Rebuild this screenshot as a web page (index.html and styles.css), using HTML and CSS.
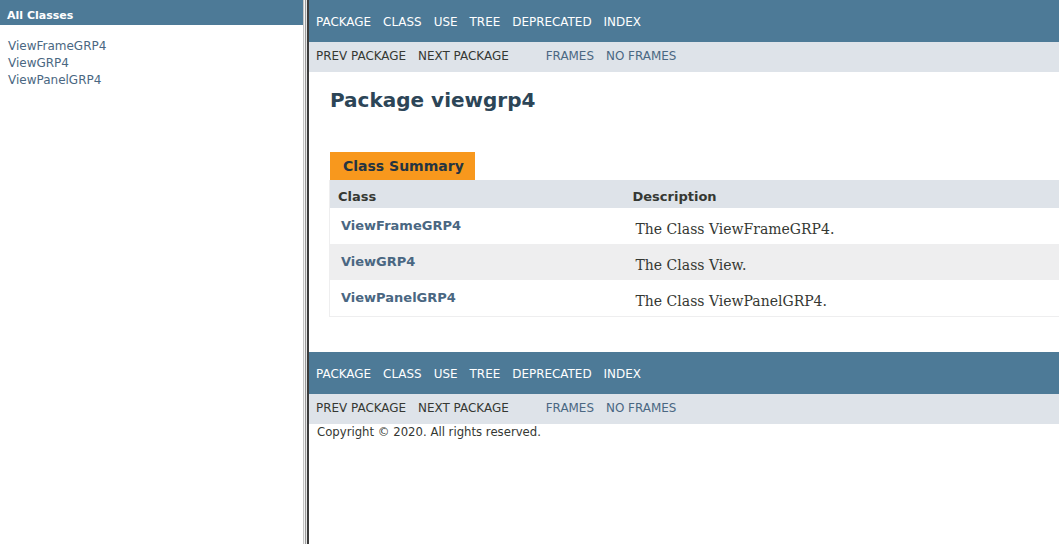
FILE: index.html
```html
<!DOCTYPE html>
<html>
<head>
<meta charset="utf-8">
<title>viewgrp4</title>
<link rel="stylesheet" href="styles.css">
</head>
<body>
<div class="frames">
  <aside class="left-frame">
    <h1 class="bar">All Classes</h1>
    <ul class="class-list">
      <li><a href="#">ViewFrameGRP4</a></li>
      <li><a href="#">ViewGRP4</a></li>
      <li><a href="#">ViewPanelGRP4</a></li>
    </ul>
  </aside>
  <div class="frame-border"><span class="b1"></span><span class="b2"></span><span class="b3"></span><span class="b4"></span><span class="b5"></span></div>
  <main class="right-frame">
    <nav class="top-nav">
      <ul class="nav-list">
        <li>Package</li>
        <li>Class</li>
        <li>Use</li>
        <li>Tree</li>
        <li>Deprecated</li>
        <li>Index</li>
      </ul>
    </nav>
    <div class="sub-nav">
      <ul class="nav-list">
        <li>Prev Package</li>
        <li>Next Package</li>
      </ul>
      <ul class="nav-list">
        <li><a href="#">Frames</a></li>
        <li><a href="#">No Frames</a></li>
      </ul>
    </div>
    <div class="header">
      <h1 class="title">Package viewgrp4</h1>
    </div>
    <div class="content">
      <div class="caption"><span>Class Summary</span></div>
      <table class="summary">
        <thead>
          <tr><th class="col-first">Class</th><th class="col-last">Description</th></tr>
        </thead>
        <tbody>
          <tr class="alt-a"><td class="col-first"><a href="#">ViewFrameGRP4</a></td><td class="col-last"><div class="block">The Class ViewFrameGRP4.</div></td></tr>
          <tr class="alt-b"><td class="col-first"><a href="#">ViewGRP4</a></td><td class="col-last"><div class="block">The Class View.</div></td></tr>
          <tr class="alt-a"><td class="col-first"><a href="#">ViewPanelGRP4</a></td><td class="col-last"><div class="block">The Class ViewPanelGRP4.</div></td></tr>
        </tbody>
      </table>
    </div>
    <nav class="top-nav bottom">
      <ul class="nav-list">
        <li>Package</li>
        <li>Class</li>
        <li>Use</li>
        <li>Tree</li>
        <li>Deprecated</li>
        <li>Index</li>
      </ul>
    </nav>
    <div class="sub-nav">
      <ul class="nav-list">
        <li>Prev Package</li>
        <li>Next Package</li>
      </ul>
      <ul class="nav-list">
        <li><a href="#">Frames</a></li>
        <li><a href="#">No Frames</a></li>
      </ul>
    </div>
    <p class="legal">Copyright © 2020. All rights reserved.</p>
  </main>
</div>
</body>
</html>
```
FILE: styles.css
```css
html, body {
  margin: 0;
  padding: 0;
  height: 100%;
  background: #ffffff;
  font-family: "DejaVu Sans", Arial, sans-serif;
  color: #353833;
  overflow: hidden;
}

a {
  color: #4A6782;
  text-decoration: none;
}

.frames {
  display: flex;
  height: 544px;
}

.left-frame {
  width: 303px;
  flex: 0 0 303px;
  background: #ffffff;
}

.bar {
  margin: 0;
  height: 25px;
  box-sizing: border-box;
  padding: 9px 6px 0 7px;
  background: #4D7A97;
  color: #ffffff;
  font-size: 11px;
  font-weight: bold;
  line-height: 13px;
}

.class-list {
  list-style: none;
  margin: 0;
  padding: 13px 0 0 8px;
  font-size: 12px;
  line-height: 17px;
}

.frame-border {
  flex: 0 0 6px;
  display: flex;
}
.frame-border span { display: block; }
.frame-border .b1 { width: 1px; background: #c4c4c4; }
.frame-border .b2 { width: 1px; background: #f4f4f4; }
.frame-border .b3 { width: 1px; background: #9a9a9a; }
.frame-border .b4 { width: 1px; background: #e6e6e6; }
.frame-border .b5 { width: 2px; background: #3c3c3c; }

.right-frame {
  flex: 1;
  min-width: 0;
}

.nav-list {
  list-style: none;
  margin: 0 25px 0 0;
  padding: 0;
  display: flex;
}
.nav-list li {
  padding: 0 6px;
  text-transform: uppercase;
  font-size: 11.95px;
  line-height: 14px;
  white-space: nowrap;
}
.nav-list li:first-child { padding-left: 7px; }

.top-nav {
  height: 42px;
  box-sizing: border-box;
  padding-top: 15px;
  background: #4D7A97;
  color: #ffffff;
}

.top-nav.bottom {
  margin-top: 35px;
}

.sub-nav {
  height: 30px;
  box-sizing: border-box;
  padding-top: 7px;
  background: #dee3e9;
  display: flex;
}
.sub-nav .nav-list + .nav-list li:first-child { padding-left: 6px; }

.header {
  padding: 16px 0 0 21px;
}
.title {
  margin: 0;
  font-size: 20px;
  line-height: 24px;
  font-weight: bold;
  color: #2c4557;
}

.content {
  padding: 40px 0 0 20px;
}

.caption {
  display: flex;
}
.caption span {
  margin-left: 1px;
  background: #F8981D;
  color: #253441;
  font-weight: bold;
  font-size: 14px;
  line-height: 17px;
  height: 28px;
  box-sizing: border-box;
  padding: 6px 11px 0 13px;
  white-space: nowrap;
}

.summary {
  width: 100%;
  border-collapse: collapse;
  border-left: 1px solid #eeeeef;
  border-bottom: 1px solid #eeeeef;
}
.summary th {
  background: #dee3e9;
  text-align: left;
  font-size: 13px;
  font-weight: bold;
  line-height: 16px;
  height: 28px;
  box-sizing: border-box;
  padding: 9px 3px 3px 8px;
  vertical-align: top;
}
.summary th.col-first { width: 296px; }
.summary th.col-last { padding-left: 7px; }

.summary td {
  height: 36px;
  box-sizing: border-box;
  padding: 7px 3px 3px 11px;
  vertical-align: top;
}
.summary td.col-last { padding-left: 10px; padding-top: 10px; }
.summary td.col-first a {
  font-weight: bold;
  font-size: 13px;
  line-height: 16px;
}
.summary tr.alt-a { background: #ffffff; }
.summary tr.alt-b { background: #eeeeef; }

.block {
  font-family: "DejaVu Serif", Georgia, serif;
  font-size: 14px;
  line-height: 17px;
  margin: 3px 10px 0 0;
}

.legal {
  margin: 0;
  padding: 1px 0 0 8px;
  font-size: 11.7px;
  line-height: 14px;
  color: #353833;
}
```
